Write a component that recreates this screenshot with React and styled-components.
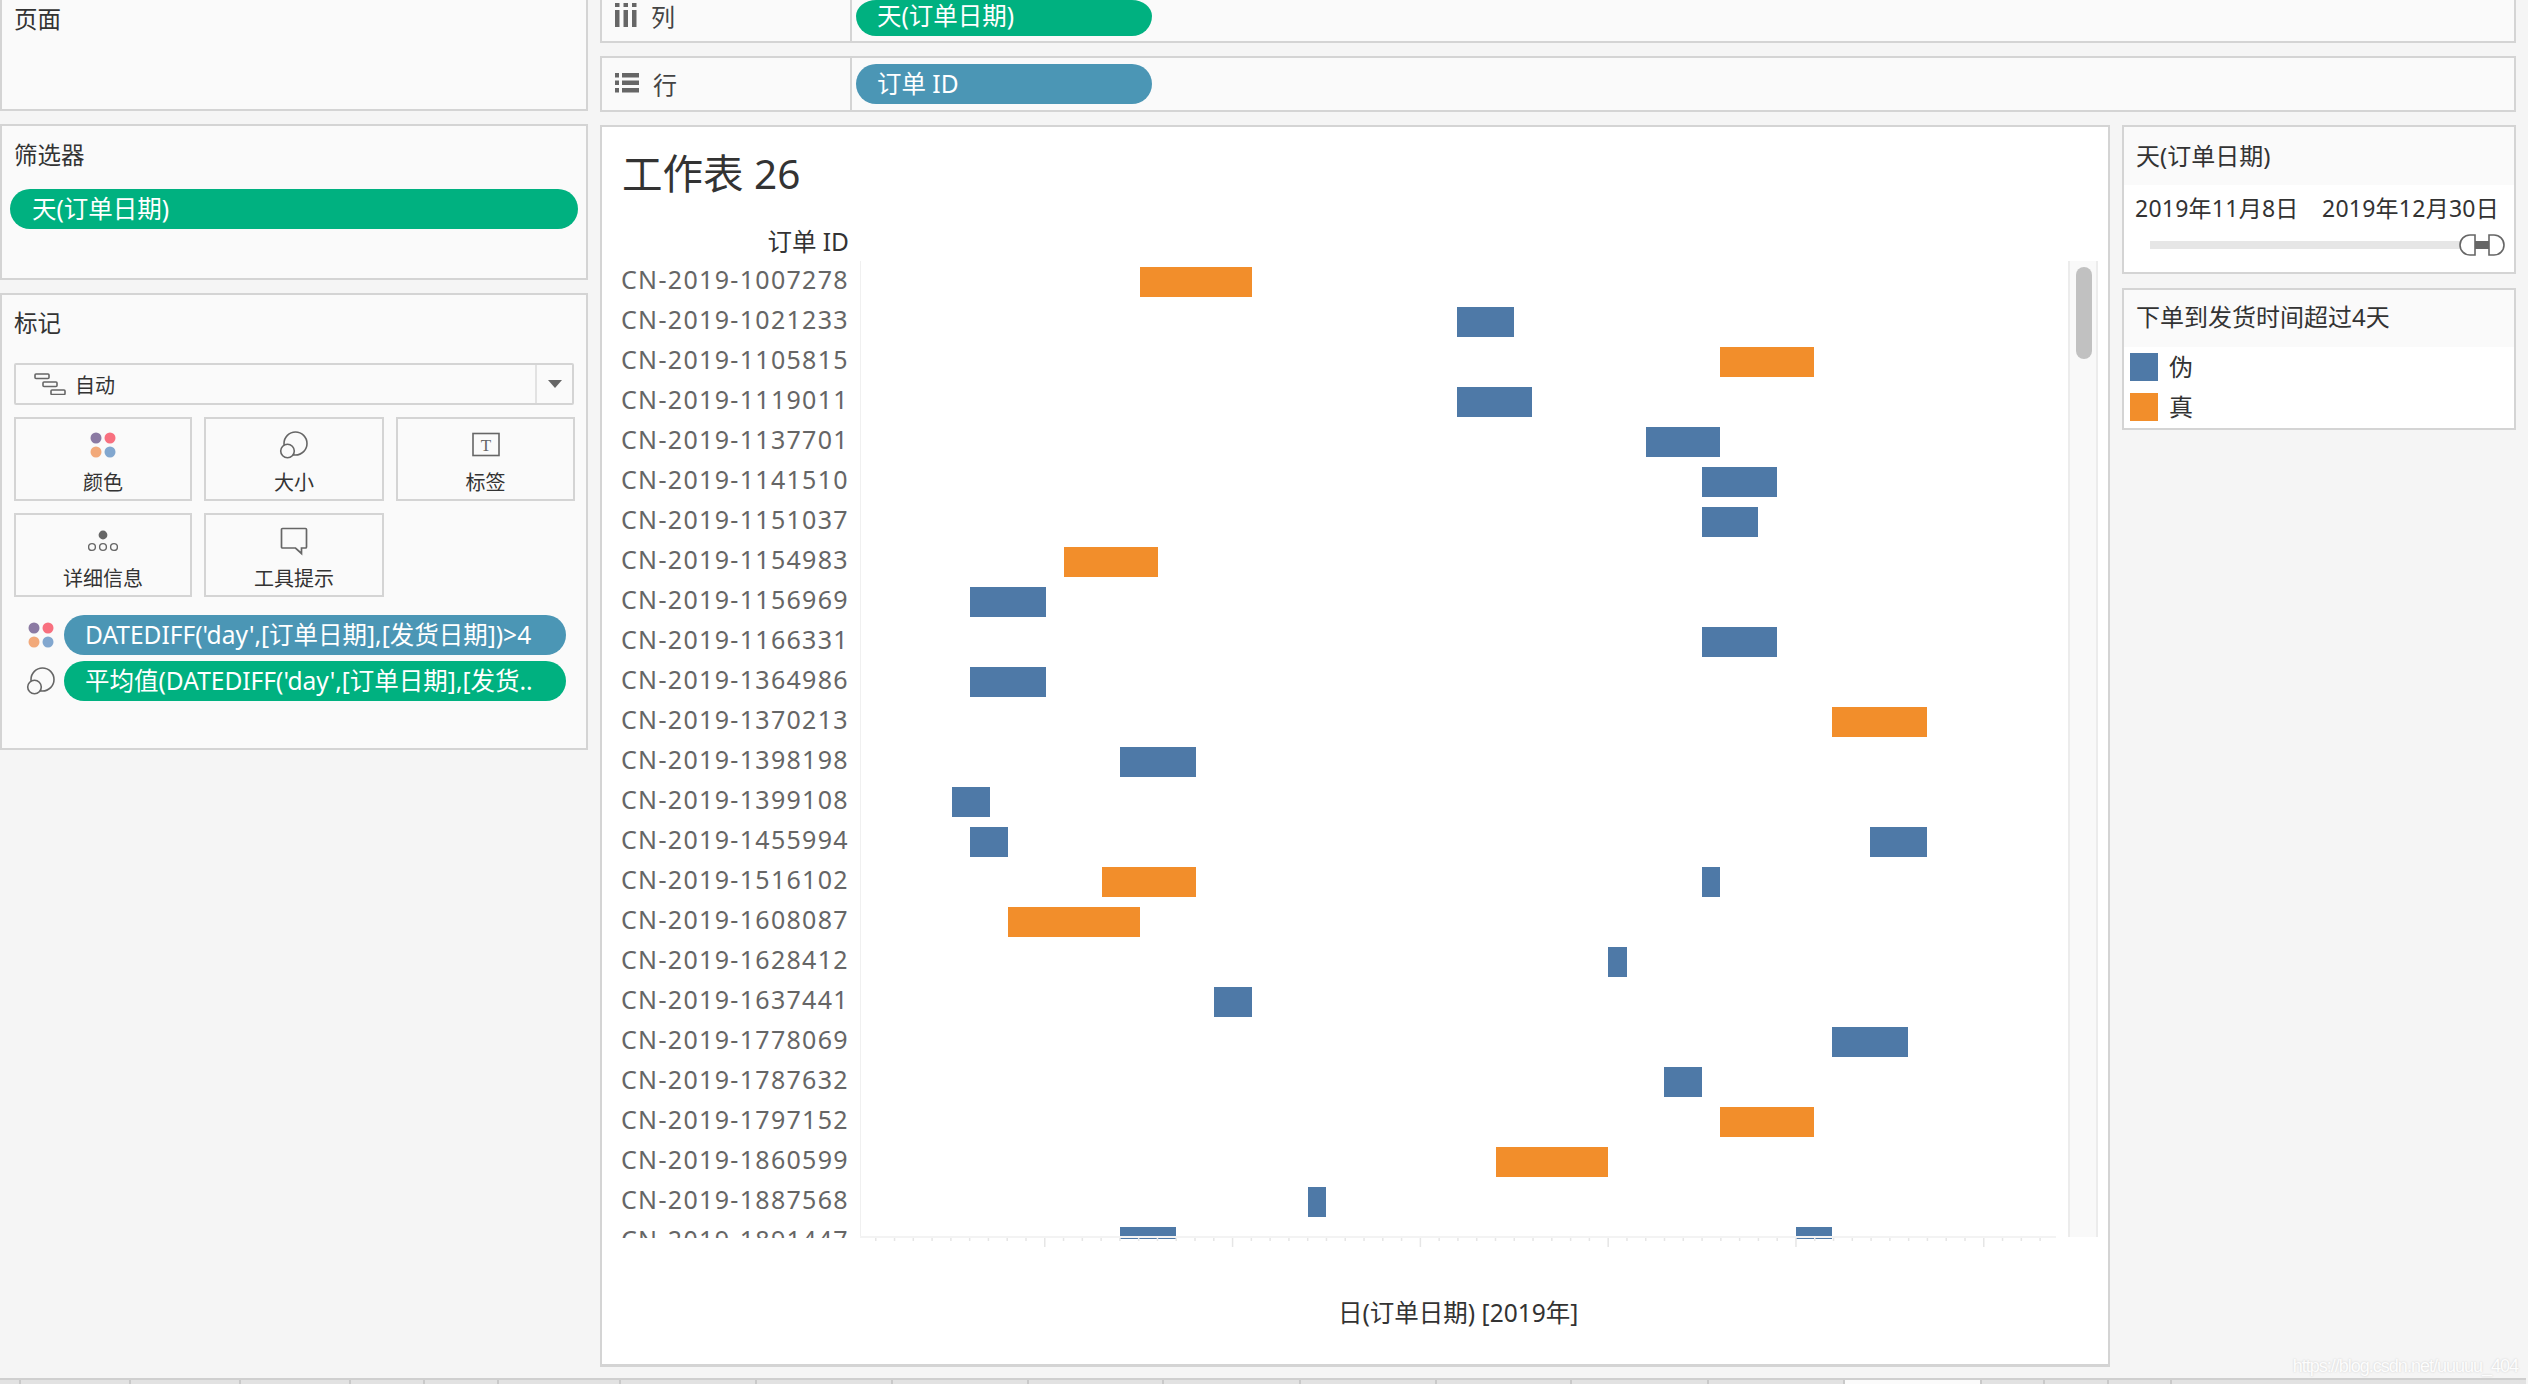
import React from 'react';
import styled, { createGlobalStyle } from 'styled-components';

const FONT = '"Noto Sans", "Noto Sans CJK SC", sans-serif';

const GlobalStyle = createGlobalStyle`
  html, body {
    margin: 0;
    padding: 0;
    height: 100%;
    overflow: hidden;
    background: #f5f5f5;
  }
  body {
    font-family: ${FONT};
    color: #333;
  }
`;

const BLUE = '#4e79a7';
const ORANGE = '#f28e2b';

// [order id, [[x from, x to, colour], ...]] x is px from the pane's left edge
const ROWS = [
  ['CN-2019-1007278', [[280, 392, ORANGE]]],
  ['CN-2019-1021233', [[597, 654, BLUE]]],
  ['CN-2019-1105815', [[860, 954, ORANGE]]],
  ['CN-2019-1119011', [[597, 672, BLUE]]],
  ['CN-2019-1137701', [[786, 860, BLUE]]],
  ['CN-2019-1141510', [[842, 917, BLUE]]],
  ['CN-2019-1151037', [[842, 898, BLUE]]],
  ['CN-2019-1154983', [[204, 298, ORANGE]]],
  ['CN-2019-1156969', [[110, 186, BLUE]]],
  ['CN-2019-1166331', [[842, 917, BLUE]]],
  ['CN-2019-1364986', [[110, 186, BLUE]]],
  ['CN-2019-1370213', [[972, 1067, ORANGE]]],
  ['CN-2019-1398198', [[260, 336, BLUE]]],
  ['CN-2019-1399108', [[92, 130, BLUE]]],
  ['CN-2019-1455994', [[110, 148, BLUE], [1010, 1067, BLUE]]],
  ['CN-2019-1516102', [[242, 336, ORANGE], [842, 860, BLUE]]],
  ['CN-2019-1608087', [[148, 280, ORANGE]]],
  ['CN-2019-1628412', [[748, 767, BLUE]]],
  ['CN-2019-1637441', [[354, 392, BLUE]]],
  ['CN-2019-1778069', [[972, 1048, BLUE]]],
  ['CN-2019-1787632', [[804, 842, BLUE]]],
  ['CN-2019-1797152', [[860, 954, ORANGE]]],
  ['CN-2019-1860599', [[636, 748, ORANGE]]],
  ['CN-2019-1887568', [[448, 466, BLUE]]],
  ['CN-2019-1891447', [[260, 316, BLUE], [936, 972, BLUE]]],
];

const ROW_H = 40;
const FIRST_BAR = 6; // pane top to first bar
const TAB_EDGES = [
  0, 21, 131, 241, 351, 425, 499, 621, 757, 893, 1029, 1164, 1301, 1437, 1572, 1709, 1845, 1982, 2045, 2109, 2172,
];
const ACTIVE_TAB = 16;

const Page = styled.div`
  position: relative;
  width: 2528px;
  height: 1384px;
  display: flex;
  flex-direction: column;
  overflow: hidden;
`;

const Workspace = styled.div`
  height: 1378px;
  display: flex;
`;

const LeftColumn = styled.div`
  width: 588px;
  margin-right: 12px;
  display: flex;
  flex-direction: column;
  gap: 13px;
`;

const RightColumn = styled.div`
  width: 1916px;
  display: flex;
  flex-direction: column;
`;

const Card = styled.section`
  box-sizing: border-box;
  background: #fafafa;
  border: 2px solid #d4d4d4;
  height: ${({ $h }) => $h}px;
  ${({ $cut }) => $cut && 'border-top: none;'}
`;

const CardTitle = styled.div`
  font-size: 23.5px;
  line-height: 32px;
  color: #333;
  padding: ${({ $top }) => $top}px 0 0 12px;
`;

const FilterPill = styled.div`
  box-sizing: border-box;
  height: 40px;
  margin: 18px 8px 0 8px;
  padding-left: 22px;
  border-radius: 20px;
  background: #00b180;
  color: #fff;
  font-size: 24.5px;
  line-height: 40px;
  white-space: nowrap;
`;

const MarkSelect = styled.div`
  box-sizing: border-box;
  height: 42px;
  margin: 24px 12px 0 12px;
  border: 2px solid #d4d4d4;
  border-radius: 2px;
  background: #fafafa;
  display: flex;
  align-items: center;
  font-size: 20px;
`;

const SelectValue = styled.div`
  flex: 1;
  display: flex;
  align-items: center;
  gap: 9px;
  padding-left: 18px;
  height: 100%;
`;

const SelectArrow = styled.div`
  width: 35px;
  height: 100%;
  border-left: 2px solid #e2e2e2;
  display: flex;
  align-items: center;
  justify-content: center;
`;

const MarkGrid = styled.div`
  margin: 12px 12px 0 12px;
  display: grid;
  grid-template-columns: 178px 180px 179px;
  grid-auto-rows: 84px;
  gap: 12px;
`;

const MarkButton = styled.div`
  box-sizing: border-box;
  border: 2px solid #d4d4d4;
  display: flex;
  flex-direction: column;
  align-items: center;
  font-size: 20px;
  color: #333;
  line-height: 24px;
  padding-top: 10px;
  svg {
    display: block;
    height: 32px;
    margin-bottom: 10px;
  }
`;

const PillRows = styled.div`
  margin-top: 18px;
  display: flex;
  flex-direction: column;
  gap: 6px;
`;

const PillRow = styled.div`
  display: flex;
  align-items: center;
  height: 40px;
  padding-left: 24px;
`;

const PillIcon = styled.div`
  width: 38px;
  display: flex;
  justify-content: flex-start;
`;

const MarkPill = styled.div`
  box-sizing: border-box;
  width: 502px;
  height: 40px;
  border-radius: 20px;
  background: ${({ $color }) => $color};
  color: #fff;
  font-size: 24.5px;
  line-height: 40px;
  padding-left: 21px;
  white-space: nowrap;
  overflow: hidden;
`;

const Shelf = styled.div`
  box-sizing: border-box;
  height: ${({ $h }) => $h}px;
  margin-bottom: 13px;
  border: 2px solid #d4d4d4;
  background: #fafafa;
  display: flex;
  ${({ $cut }) => $cut && 'border-top: none;'}
`;

const ShelfLabel = styled.div`
  width: 235px;
  border-right: 2px solid #d4d4d4;
  display: flex;
  align-items: center;
  gap: 14px;
  padding: 0 0 ${({ $bottom }) => $bottom || 0}px 13px;
  font-size: 24px;
  color: #444;
`;

const ShelfPill = styled.div`
  box-sizing: border-box;
  flex: none;
  width: 296px;
  height: ${({ $cut }) => ($cut ? 36 : 40)}px;
  margin: ${({ $cut }) => ($cut ? 0 : 6)}px 0 0 4px;
  padding-left: 21px;
  border-radius: ${({ $cut }) => ($cut ? '20px / 16px 16px 20px 20px' : '20px')};
  background: ${({ $color }) => $color};
  color: #fff;
  font-size: 24.5px;
  line-height: ${({ $cut }) => ($cut ? 32 : 40)}px;
`;

const ContentRow = styled.div`
  display: flex;
  gap: 12px;
`;

const Sheet = styled.section`
  box-sizing: border-box;
  width: 1510px;
  height: 1242px;
  background: #fff;
  border: 2px solid #d4d4d4;
  border-bottom-width: 3px;
  display: flex;
  flex-direction: column;
`;

const SheetTitle = styled.h1`
  margin: 0;
  padding: 21px 0 0 20px;
  font-size: 40.5px;
  line-height: 52px;
  font-weight: 400;
  color: #333;
`;

const AxisHeader = styled.div`
  width: 247px;
  margin-top: 26px;
  text-align: right;
  font-size: 24.5px;
  line-height: 32px;
  color: #333;
`;

const ChartBody = styled.div`
  height: 976px;
  margin-top: 3px;
  display: flex;
`;

const LabelColumn = styled.div`
  width: 258px;
  height: 977px;
  overflow: hidden;
`;

const RowLabel = styled.div`
  width: 247px;
  height: ${ROW_H}px;
  line-height: ${ROW_H - 3}px;
  text-align: right;
  font-size: 25px;
  letter-spacing: 1.32px;
  color: #666;
  white-space: nowrap;
`;

const Pane = styled.svg`
  width: 1206px;
  height: 986px;
  display: block;
  flex: none;
`;

const ScrollTrack = styled.div`
  box-sizing: border-box;
  flex: none;
  width: 30px;
  height: 976px;
  margin-left: 2px;
  padding: 6px 0 0 6px;
  background: #f9f9f9;
  border-left: 2px solid #ececec;
  border-right: 2px solid #ececec;
`;

const ScrollThumb = styled.div`
  width: 16px;
  height: 92px;
  border-radius: 8px;
  background: #c1c1c1;
`;

const AxisTitle = styled.div`
  margin-top: 60px;
  padding-left: 736px;
  font-size: 24.5px;
  line-height: 32px;
  color: #333;
`;

const SideColumn = styled.div`
  width: 394px;
  display: flex;
  flex-direction: column;
  gap: 14px;
`;

const SideCard = styled.section`
  box-sizing: border-box;
  height: ${({ $h }) => $h}px;
  background: #fff;
  border: 2px solid #d4d4d4;
  overflow: hidden;
`;

const SideHead = styled.div`
  box-sizing: border-box;
  height: ${({ $h }) => $h}px;
  background: #fafafa;
  padding: ${({ $top }) => $top}px 0 0 12px;
  font-size: 24px;
  line-height: 32px;
  color: #333;
  white-space: nowrap;
`;

const DateRange = styled.div`
  display: flex;
  justify-content: space-between;
  padding: 7px 15px 0 11px;
  font-size: 23px;
  letter-spacing: 0.25px;
  line-height: 32px;
  color: #333;
  white-space: nowrap;
`;

const SliderWrap = styled.div`
  margin: 10px 0 0 26px;
  height: 22px;
  width: 357px;
  position: relative;
`;

const SliderTrack = styled.div`
  position: absolute;
  left: 0;
  right: 46px;
  top: 7px;
  height: 8px;
  background: #e6e6e6;
`;

const SliderHandles = styled.svg`
  position: absolute;
  right: 0;
  top: 0;
`;

const LegendList = styled.div`
  padding: 6px 0 0 6px;
  display: flex;
  flex-direction: column;
  gap: 12px;
`;

const LegendRow = styled.div`
  display: flex;
  align-items: center;
  gap: 11px;
  height: 28px;
  font-size: 24px;
  line-height: 26px;
  color: #333;
`;

const Swatch = styled.div`
  width: 28px;
  height: 28px;
  background: ${({ $color }) => $color};
`;

const TabBar = styled.div`
  box-sizing: border-box;
  height: 6px;
  width: 2526px;
  background: #e2e2e2;
  border-top: 2px solid #cfcfcf;
  display: flex;
`;

const Tab = styled.div`
  box-sizing: border-box;
  flex: none;
  height: 4px;
  border-right: 2px solid #c9c9c9;
  background: ${({ $active }) => ($active ? '#fbfbfb' : 'transparent')};
`;

const Watermark = styled.div`
  position: absolute;
  right: 10px;
  bottom: 6px;
  font-family: "Liberation Sans", sans-serif;
  font-size: 18px;
  line-height: 24px;
  letter-spacing: -1px;
  color: #fff;
  text-shadow: 0 0 2px #c4c4c4;
  opacity: 0.85;
`;

const ColorDots = () => (
  <svg width="30" height="30" viewBox="0 0 30 30">
    <circle cx="8" cy="8" r="5.5" fill="#8b7aa3" />
    <circle cx="22" cy="8" r="5.5" fill="#f8707f" />
    <circle cx="8" cy="22" r="5.5" fill="#f2a97a" />
    <circle cx="22" cy="22" r="5.5" fill="#82a7cf" />
  </svg>
);

const SizeIcon = () => (
  <svg width="30" height="30" viewBox="0 0 30 30" stroke="#666" strokeWidth="1.6">
    <circle cx="16.5" cy="13.500" r="11.500" fill="none" />
    <circle cx="8.500" cy="21" r="6.800" fill="#fafafa" />
  </svg>
);

const App = () => {
  const ticks = [];
  for (let i = 0; i < 63; i++) {
    const x = 15 + i * 18.78;
    if (x > 1196) break;
    ticks.push({ x, major: i % 10 === 9 });
  }

  return (
    <Page>
      <GlobalStyle />
      <Workspace>
        <LeftColumn>
          <Card $h={111} $cut>
            <CardTitle $top={3}>页面</CardTitle>
          </Card>
          <Card $h={156}>
            <CardTitle $top={13}>筛选器</CardTitle>
            <FilterPill>天(订单日期)</FilterPill>
          </Card>
          <Card $h={457}>
            <CardTitle $top={12}>标记</CardTitle>
            <MarkSelect>
              <SelectValue>
                <svg width="32" height="22" viewBox="0 0 32 22" fill="none" stroke="#666" strokeWidth="1.6">
                  <rect x="1" y="1" width="14" height="4.5" rx="1" />
                  <rect x="9" y="9" width="14" height="4.5" rx="1" />
                  <rect x="17" y="17" width="14" height="4.5" rx="1" />
                </svg>
                自动
              </SelectValue>
              <SelectArrow>
                <svg width="14" height="8" viewBox="0 0 14 8">
                  <path d="M0 0h14L7 8z" fill="#666" />
                </svg>
              </SelectArrow>
            </MarkSelect>
            <MarkGrid>
              <MarkButton>
                <ColorDots />
                颜色
              </MarkButton>
              <MarkButton>
                <SizeIcon />
                大小
              </MarkButton>
              <MarkButton>
                <svg width="30" height="30" viewBox="0 0 30 30" fill="none">
                  <rect x="2" y="3.5" width="26" height="22" stroke="#666" strokeWidth="1.6" />
                  <text
                    x="15"
                    y="20.500"
                    textAnchor="middle"
                    fontFamily="Liberation Serif, serif"
                    fontSize="17"
                    fill="#666"
                  >
                    T
                  </text>
                </svg>
                标签
              </MarkButton>
              <MarkButton>
                <svg width="30" height="30" viewBox="0 0 30 30" fill="none" stroke="#666" strokeWidth="1.4">
                  <circle cx="15" cy="9" r="4.4" fill="#666" stroke="none" />
                  <circle cx="4" cy="21" r="3.4" />
                  <circle cx="15" cy="21" r="3.4" />
                  <circle cx="26" cy="21" r="3.4" />
                </svg>
                详细信息
              </MarkButton>
              <MarkButton>
                <svg width="30" height="30" viewBox="0 0 30 30" fill="none">
                  <path
                    d="M3.500 2.500h23a1 1 0 0 1 1 1v17.500a1 1 0 0 1-1 1h-4v5.500l-6-5.500H3.500a1 1 0 0 1-1-1V3.500a1 1 0 0 1 1-1z"
                    stroke="#666"
                    strokeWidth="1.7"
                  />
                </svg>
                工具提示
              </MarkButton>
            </MarkGrid>
            <PillRows>
              <PillRow>
                <PillIcon>
                  <ColorDots />
                </PillIcon>
                <MarkPill $color="#4b96b5">DATEDIFF('day',[订单日期],[发货日期])&gt;4</MarkPill>
              </PillRow>
              <PillRow>
                <PillIcon>
                  <SizeIcon />
                </PillIcon>
                <MarkPill $color="#00b180">平均值(DATEDIFF('day',[订单日期],[发货..</MarkPill>
              </PillRow>
            </PillRows>
          </Card>
        </LeftColumn>

        <RightColumn>
          <Shelf $h={43} $cut>
            <ShelfLabel $bottom={11}>
              <svg width="22" height="24" viewBox="0 0 22 24" fill="#666">
                <rect x="0" y="0" width="4.500" height="4" />
                <rect x="8.500" y="0" width="4.500" height="4" />
                <rect x="17" y="0" width="4.500" height="4" />
                <rect x="0" y="7" width="4.500" height="17" />
                <rect x="8.500" y="7" width="4.500" height="17" />
                <rect x="17" y="7" width="4.500" height="17" />
              </svg>
              列
            </ShelfLabel>
            <ShelfPill $cut $color="#00b180">天(订单日期)</ShelfPill>
          </Shelf>
          <Shelf $h={56}>
            <ShelfLabel $bottom={2}>
              <svg width="24" height="22" viewBox="0 0 24 22" fill="#666">
                <rect x="0" y="1" width="4" height="4.500" />
                <rect x="7" y="1" width="17" height="4.500" />
                <rect x="0" y="8.500" width="4" height="4.500" />
                <rect x="7" y="8.500" width="17" height="4.500" />
                <rect x="0" y="16" width="4" height="4.500" />
                <rect x="7" y="16" width="17" height="4.500" />
              </svg>
              行
            </ShelfLabel>
            <ShelfPill $color="#4b96b5">订单 ID</ShelfPill>
          </Shelf>
          <ContentRow>
            <Sheet>
              <SheetTitle>工作表 26</SheetTitle>
              <AxisHeader>订单 ID</AxisHeader>
              <ChartBody>
                <LabelColumn>
                  {ROWS.map(([id]) => (
                    <RowLabel key={id}>{id}</RowLabel>
                  ))}
                </LabelColumn>
                <Pane viewBox="0 0 1206 986">
                  <rect x="0" y="0" width="1" height="975" fill="#f0f0f0" />
                  {ROWS.map(([id, bars], i) =>
                    bars.map(([from, to, color]) => {
                      const y = FIRST_BAR + i * ROW_H;
                      return (
                        <rect
                          key={id + from}
                          x={from}
                          y={y}
                          width={to - from}
                          height={Math.min(30, 978 - y)}
                          fill={color}
                        />
                      );
                    }),
                  )}
                  <rect x="0" y="975" width="1196" height="2" fill="#f3f3f3" />
                  {ticks.map(({ x, major }) => (
                    <rect key={x} x={x} y="977" width="1.500" height={major ? 9 : 3} fill="#e6e6e6" />
                  ))}
                </Pane>
                <ScrollTrack>
                  <ScrollThumb />
                </ScrollTrack>
              </ChartBody>
              <AxisTitle>日(订单日期) [2019年]</AxisTitle>
            </Sheet>

            <SideColumn>
              <SideCard $h={149}>
                <SideHead $h={58} $top={13}>天(订单日期)</SideHead>
                <DateRange>
                  <span>2019年11月8日</span>
                  <span>2019年12月30日</span>
                </DateRange>
                <SliderWrap>
                  <SliderTrack />
                  <SliderHandles width="48" height="22" viewBox="0 0 48 22" fill="none">
                    <rect x="16" y="7" width="14" height="8" fill="#666" />
                    <path d="M16 1H11a10 10 0 0 0 0 20h5z" fill="#fff" stroke="#666" strokeWidth="1.600" />
                    <path d="M30 1h5a10 10 0 0 1 0 20h-5z" fill="#fff" stroke="#666" strokeWidth="1.600" />
                  </SliderHandles>
                </SliderWrap>
              </SideCard>
              <SideCard $h={142}>
                <SideHead $h={57} $top={11}>下单到发货时间超过4天</SideHead>
                <LegendList>
                  <LegendRow>
                    <Swatch $color={BLUE} />伪
                  </LegendRow>
                  <LegendRow>
                    <Swatch $color={ORANGE} />真
                  </LegendRow>
                </LegendList>
              </SideCard>
            </SideColumn>
          </ContentRow>
        </RightColumn>
      </Workspace>
      <TabBar>
        {TAB_EDGES.slice(1).map((edge, i) => (
          <Tab key={edge} $active={i === ACTIVE_TAB} style={{ width: edge - TAB_EDGES[i] }} />
        ))}
      </TabBar>
      <Watermark>https://blog.csdn.net/uuuuu_404</Watermark>
    </Page>
  );
};

export default App;
